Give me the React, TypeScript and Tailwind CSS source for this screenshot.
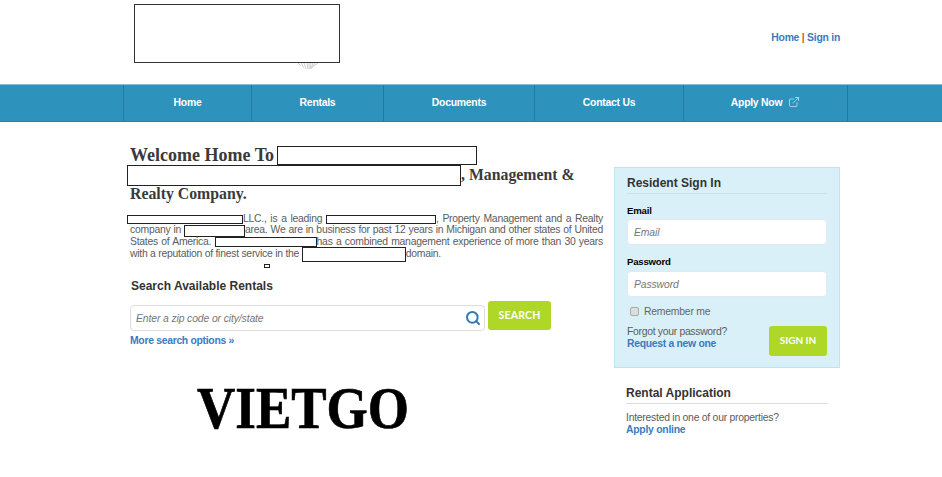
import { Search, ExternalLink } from "lucide-react";

const sans = "font-['Liberation_Sans',Arial,sans-serif]";

function Box({ className }: { className: string }) {
  return <span className={`inline-block shrink-0 border border-[#222] bg-white align-middle ${className}`} />;
}

const navItems = [
  { label: "Home", w: "w-[128px]" },
  { label: "Rentals", w: "w-[132px]" },
  { label: "Documents", w: "w-[151px]" },
  { label: "Contact Us", w: "w-[149px]" },
  { label: "Apply Now", w: "w-[165px]", icon: true },
];

const bodyLine = "block h-[11.4px] leading-[11.4px] whitespace-nowrap text-justify [text-align-last:justify]";

export default function App() {
  return (
    <div className={`${sans} h-[477px] w-[942px] overflow-hidden bg-white text-[#333]`}>
      <header className="flex h-[84px] pl-[134px] pr-[102px]">
        <div className="relative mt-1 h-[59px] w-[206px] border border-[#333]">
          <svg className="absolute left-[160px] top-[57px]" width="26" height="8" viewBox="0 0 26 8" stroke="#bbb" strokeWidth="0.7">
            <path d="M3 1l3 3M6 1l3 5M9 1l2 6M12 1l1 6M14 1v6M16 1l-1 6M18 1l-2 6M20 1l-3 5M23 1l-4 3" />
          </svg>
        </div>
        <div className="ml-auto mt-[31px] text-[10.4px] font-bold leading-[13px] tracking-[-0.25px] text-[#3a7bc0]">
          Home <span className="text-[#b5651d]">|</span> Sign in
        </div>
      </header>

      <nav className="flex h-[38px] border-y border-t-[#85bfd8] border-b-[#2a7fa6] bg-[#2d92bc] pl-[123px]">
        {navItems.map((n) => (
          <div
            key={n.label}
            className={`${n.w} flex items-center justify-center gap-[6px] border-l border-[#25789f] text-[10.4px] font-bold tracking-[-0.25px] text-white last:border-r`}
          >
            {n.label}
            {n.icon && <ExternalLink size={12} strokeWidth={1.4} className="-mt-[3px] text-[#d5e9f2]" />}
          </div>
        ))}
      </nav>

      <main className="flex pl-[130px]">
        <section className="w-[473px] pt-[23px]">
          <h1 className="font-['Liberation_Serif',serif] font-bold text-[#3a3a3a]">
            <div className="flex h-[20px] items-center gap-[3px] text-[18px] leading-[20px]">
              Welcome Home To <Box className="h-[19px] w-[200px]" />
            </div>
            <div className="-ml-[3px] flex h-[21px] items-center text-[15.8px] leading-[19px]">
              <Box className="h-[21px] w-[334px]" />
              <span className="-mt-[2px] whitespace-pre">, Management &amp;</span>
            </div>
            <div className="flex h-[15px] items-center text-[15.8px] leading-[15px]">Realty Company.</div>
          </h1>

          <p className="mt-[12px] text-[10.4px] tracking-[-0.25px] text-[#5c5c5c]">
            <span className={`${bodyLine} -ml-[3px]`}>
              <Box className="h-[9px] w-[116px]" />LLC., is a leading <Box className="h-[9px] w-[110px]" />, Property Management and a Realty
            </span>
            <span className={bodyLine}>
              company in <Box className="h-[12px] w-[61px]" />area. We are in business for past 12 years in Michigan and other states of United
            </span>
            <span className={bodyLine}>
              States of America. <Box className="h-[10px] w-[102px]" />has a combined management experience of more than 30 years
            </span>
            <span className="block h-[11.4px] whitespace-nowrap leading-[11.4px]">
              with a reputation of finest service in the <Box className="h-[15px] w-[104px]" />domain.
            </span>
          </p>
          <div className="ml-[134px] mt-[5px] h-[4px] w-[6px] border border-[#222]" />

          <h2 className="ml-px mt-[11px] text-[12px] font-bold leading-[14px] text-[#333]">Search Available Rentals</h2>

          <div className="mt-[8px] flex items-start">
            <div className="mt-[4px] flex h-[26px] w-[355px] items-center rounded-[4px] border border-[#ddd] bg-white pl-[5px] pr-[3px]">
              <input
                placeholder="Enter a zip code or city/state"
                className="min-w-0 flex-1 bg-transparent pt-[2px] text-[10.4px] italic tracking-[-0.12px] outline-none placeholder:text-[#777]"
              />
              <Search size={16} strokeWidth={3} className="text-[#337ab7]" />
            </div>
            <button className="ml-[3px] h-[29px] w-[63px] rounded-[3px] bg-[#aed727] pt-px font-['Lato',sans-serif] text-[10.5px] font-bold tracking-[0.2px] text-white">
              SEARCH
            </button>
          </div>
          <a className="mt-[3px] block text-[10.4px] font-bold leading-[13px] tracking-[-0.3px] text-[#3a7bc0]">More search options »</a>

          <div className="ml-[67px] mt-[31px] origin-center scale-y-[1.1] font-['Liberation_Serif',serif] text-[53px] font-bold leading-[60px] text-black [-webkit-text-stroke:0.6px_black]">
            VIETGO
          </div>
        </section>

        <aside className="ml-[11px] w-[226px] pt-[45px]">
          <div className="h-[201px] border border-[#bfe3f0] bg-[#d9f0f8] px-[12px] pt-[8px]">
            <h3 className="border-b border-[#cfdfe6] pb-[2px] text-[12px] font-bold leading-[15px] text-[#333]">Resident Sign In</h3>
            <label className="mt-[11px] block text-[9.6px] font-bold leading-[12px] tracking-[-0.2px] text-black">Email</label>
            <input
              placeholder="Email"
              className="mt-[2px] block h-[26px] w-[200px] rounded-[4px] border border-[#e3eaee] bg-white px-[6px] text-[10.4px] italic tracking-[-0.12px] outline-none placeholder:text-[#777]"
            />
            <label className="mt-[11px] block text-[9.6px] font-bold leading-[12px] tracking-[-0.2px] text-black">Password</label>
            <input
              placeholder="Password"
              className="mt-[3px] block h-[26px] w-[200px] rounded-[4px] border border-[#e3eaee] bg-white px-[6px] text-[10.4px] italic tracking-[-0.12px] outline-none placeholder:text-[#777]"
            />
            <div className="mt-[8px] flex h-[13px] items-center pl-[3px] text-[10.4px] tracking-[-0.22px] text-[#666]">
              <span className="h-[9px] w-[9px] rounded-[2px] border border-[#aaa] bg-[#ddd]" />
              <span className="ml-[5px]">Remember me</span>
            </div>
            <div className="mt-[8px] flex items-start justify-between">
              <div className="text-[10.4px] leading-[11.5px] tracking-[-0.3px] text-[#5c5c5c]">
                Forgot your password?
                <a className="block font-bold text-[#3a7bc0]">Request a new one</a>
              </div>
              <button className="h-[30px] w-[58px] rounded-[3px] bg-[#aed727] pb-px font-['Lato',sans-serif] text-[10px] font-bold text-white">
                SIGN IN
              </button>
            </div>
          </div>

          <div className="w-[214px] pl-[12px] pt-[18px]">
            <h3 className="border-b border-[#ddd] pb-[2px] text-[12px] font-bold leading-[15px] text-[#333]">Rental Application</h3>
            <p className="mt-[8px] text-[10.4px] leading-[11.5px] tracking-[-0.25px] text-[#5c5c5c]">
              Interested in one of our properties?
              <a className="block font-bold text-[#3a7bc0]">Apply online</a>
            </p>
          </div>
        </aside>
      </main>
    </div>
  );
}
